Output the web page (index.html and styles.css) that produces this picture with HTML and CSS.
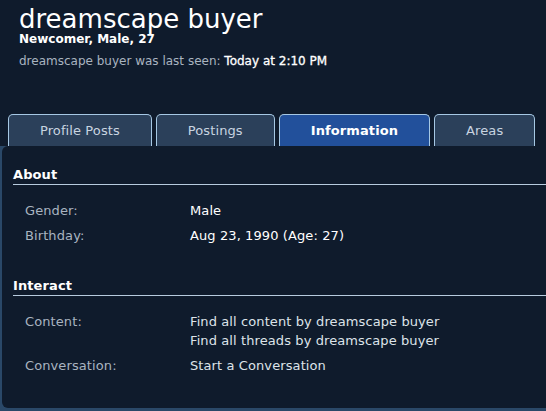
FILE: index.html
```html
<!DOCTYPE html>
<html lang="en">
<head>
    <meta charset="UTF-8">
    <title>dreamscape buyer</title>
    <link rel="stylesheet" href="styles.css">
</head>
<body>
    <div class="profile-head">
        <h1 class="username">dreamscape buyer</h1>
        <div class="user-blurb">Newcomer, Male, 27</div>
        <div class="last-seen">dreamscape buyer was last seen: <span class="seen-time">Today at 2:10 PM</span></div>
    </div>

    <ul class="tabs">
        <li>Profile Posts</li>
        <li>Postings</li>
        <li class="active">Information</li>
        <li>Areas</li>
    </ul>

    <div class="panel-wrap">
        <div class="panel">
            <!-- about -->
            <h3>About</h3>
            <dl>
                <div class="row"><dt>Gender:</dt><dd class="strong">Male</dd></div>
                <div class="row"><dt>Birthday:</dt><dd class="strong">Aug 23, 1990 (Age: 27)</dd></div>
            </dl>

            <!-- interact -->
            <h3>Interact</h3>
            <dl>
                <div class="row">
                    <dt>Content:</dt>
                    <dd>
                        <a href="#">Find all content by dreamscape buyer</a><br>
                        <a href="#">Find all threads by dreamscape buyer</a>
                    </dd>
                </div>
                <div class="row"><dt>Conversation:</dt><dd><a href="#">Start a Conversation</a></dd></div>
            </dl>
        </div>
    </div>
</body>
</html>
```

FILE: styles.css
```css
body {
    margin: 0;
    background: #0f1b2c;
    font-family: "DejaVu Sans", Verdana, sans-serif;
    color: #f2f4f6;
    font-size: 13px;
    letter-spacing: 0.1px;
}
.profile-head {
    padding: 5px 0 0 19px;
}
.username {
    margin: 0;
    font-size: 26px;
    font-weight: normal;
    line-height: 28px;
    letter-spacing: 0;
    color: #fff;
}
.user-blurb {
    font-size: 12px;
    font-weight: bold;
    line-height: 13px;
    letter-spacing: 0;
    color: #fff;
}
.last-seen {
    margin-top: 7px;
    font-size: 12px;
    line-height: 16px;
    letter-spacing: 0;
    color: #a9b4c0;
}
.seen-time {
    color: #fff;
    -webkit-text-stroke: 0.3px #fff;
}
.tabs {
    display: flex;
    gap: 4px;
    list-style: none;
    margin: 45px 0 0;
    padding: 0 0 0 8px;
}
.tabs li {
    padding: 0 31px;
    line-height: 31px;
    background: #2b405a;
    color: #c8d4e0;
    border: 1px solid #a6c8e4;
    border-bottom: none;
    border-radius: 5px 5px 0 0;
}
.tabs li.active {
    background: #22509b;
    color: #fff;
    font-weight: bold;
}
.panel-wrap {
    padding-bottom: 3px;
    background: #2a4868;
}
.panel {
    margin-left: 2px;
    padding: 20px 0 30px 11px;
    background: #0f1b2c;
    border-radius: 6px 0 0 6px;
}
h3 {
    margin: 0;
    padding-bottom: 1px;
    font-size: 13px;
    line-height: 17px;
    color: #fff;
    border-bottom: 1px solid #b7cbde;
}
dl {
    margin: 13px 0 29px 12px;
}
dl:last-child {
    margin-bottom: 0;
}
.row {
    display: flex;
    padding: 3px 0;
    line-height: 19px;
}
dt {
    width: 165px;
    color: #a9b4c0;
}
dd {
    margin: 0;
}
dd.strong {
    color: #fff;
}
dd a {
    color: #dde3e9;
    text-decoration: none;
}
```
